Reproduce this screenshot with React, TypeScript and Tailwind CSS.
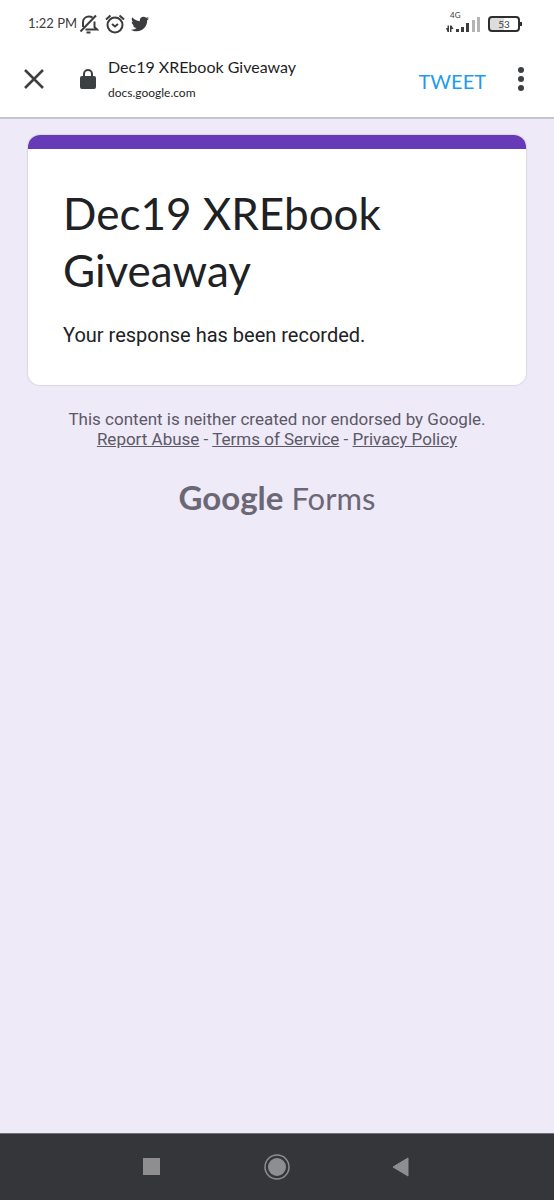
import { FaTwitter } from 'react-icons/fa';

const BellOffIcon = () => (
  <svg viewBox="0 0 20 20" className="h-5 w-5" fill="none" stroke="currentColor" strokeWidth="2">
    <path d="M4 13V8.5C4 5 6.5 2.5 10 2.5c1.400 0 2.500.4 3.500 1.100M15.500 7.500V13l2.500 2.500H6.500" />
    <path d="M1.500 17.500 17 1.500" />
    <path d="M7.500 18.500h4" />
  </svg>
);

const AlarmIcon = () => (
  <svg viewBox="0 0 20 20" className="h-5 w-5" fill="none" stroke="currentColor" strokeWidth="2">
    <circle cx="10" cy="11" r="7.500" />
    <path d="M1 5.500 5.500 1.500M19 5.500 14.500 1.500" />
    <path d="m7 10 3 2.500 3-2.500" />
  </svg>
);

const CloseIcon = () => (
  <svg viewBox="0 0 20 20" className="h-5 w-5" fill="none" stroke="currentColor" strokeWidth="2.5">
    <path d="m1 1 18 18M19 1 1 19" />
  </svg>
);

const LockIcon = () => (
  <svg viewBox="0 0 16 20" className="h-5 w-4" fill="currentColor">
    <rect y="7" width="16" height="13" rx="2" />
    <path d="M4 8V5a4 4 0 0 1 8 0v3" fill="none" stroke="currentColor" strokeWidth="2" />
  </svg>
);

const SignalIcon = () => (
  <svg viewBox="0 0 34 18" className="h-[18px] w-[34px]" fill="currentColor">
    <path d="M0 13h1.500v-2.500H3V17H1.500zM4 10.500h1.500l2 3.500h-2v3H4z" />
    <path d="M10 14h3v3h-3zM15 12h3v5h-3zM20 8h3v9h-3z" />
    <path d="M26 5h3v12h-3zM31 2h3v15h-3z" fill="#b4b4b4" />
  </svg>
);

const StatusBar = () => {
  return (
    <div className="flex h-12 items-center justify-between pr-8 pl-7 text-[#3c3c3e]">
      <div className="flex items-center gap-1.5">
        <span className="-mr-1 text-[13px]">1:22 PM</span>
        <BellOffIcon />
        <AlarmIcon />
        <FaTwitter className="h-[18px] w-[18px]" />
      </div>
      <div className="flex items-center gap-2">
        <div className="relative">
          <span className="absolute -top-1 left-1 text-[8px] leading-none">4G</span>
          <SignalIcon />
        </div>
        <div className="flex items-center">
          <div className="flex h-4 w-8 items-center justify-center rounded-[4px] border-2 border-[#2e2e30] bg-linear-to-r from-[#dddddd] from-50% to-white to-50% text-[10px] leading-none">
            53
          </div>
          <div className="h-1 w-0.5 bg-[#2e2e30]"></div>
        </div>
      </div>
    </div>
  );
};

const Toolbar = () => {
  return (
    <div className="flex h-[71px] items-center border-b-2 border-[#c6c4d2] px-6 pb-2 text-[#3c4043]">
      <button type="button" aria-label="Close" className="mr-9">
        <CloseIcon />
      </button>
      <LockIcon />
      <div className="ml-3 flex flex-1 flex-col gap-1 text-[#1f1f1f]">
        <span className="text-base leading-6">Dec19 XREbook Giveaway</span>
        <span className="text-xs leading-5">docs.google.com</span>
      </div>
      <button type="button" className="pt-1 text-[20px] text-[#1d9bf0]">TWEET</button>
      <button type="button" aria-label="More options" className="mr-1.5 ml-8">
        <svg viewBox="0 0 6 24" className="h-6 w-[6px]" fill="currentColor">
          <circle cx="3" cy="3" r="3" />
          <circle cx="3" cy="12" r="3" />
          <circle cx="3" cy="21" r="3" />
        </svg>
      </button>
    </div>
  );
};

const FormCard = () => {
  return (
    <div className="overflow-hidden rounded-xl bg-white shadow-[0_0_1px_1px_#dcd8e4]">
      <div className="h-[14px] bg-[#673ab7]"></div>
      <div className="px-[35px] pt-9 pb-[34px]">
        <h1 className="font-['Lato',sans-serif] text-[44px] leading-[57px] text-[#202124]">
          Dec19 XREbook Giveaway
        </h1>
        <p className="mt-5 text-[20px] leading-8 text-[#202124]">Your response has been recorded.</p>
      </div>
    </div>
  );
};

const NavBar = () => {
  return (
    <nav className="grid h-[67px] grid-cols-3 place-items-center border-t border-[#707078] bg-[#35363a] px-[90px] text-[#8e8e90]">
      <button type="button" aria-label="Recent apps">
        <svg viewBox="0 0 18 18" className="h-[18px] w-[18px]" fill="currentColor">
          <path d="M0 0h17v17H0z" />
        </svg>
      </button>
      <button type="button" aria-label="Home">
        <svg viewBox="0 0 26 26" className="h-[26px] w-[26px]" fill="currentColor">
          <circle cx="13" cy="13" r="9" />
          <circle cx="13" cy="13" r="12" fill="none" stroke="currentColor" strokeWidth="1.5" />
        </svg>
      </button>
      <button type="button" aria-label="Back">
        <svg viewBox="0 0 20 20" className="h-5 w-5" fill="currentColor" stroke="currentColor" strokeWidth="1" strokeLinejoin="round">
          <path d="M1 10 16 1v18z" />
        </svg>
      </button>
    </nav>
  );
};

const App = () => {
  return (
    <div className="flex min-h-screen flex-col bg-[#eeeaf8] font-['Roboto',sans-serif]">
      <header className="bg-white font-['Lato',sans-serif]">
        <StatusBar />
        <Toolbar />
      </header>

      <main className="flex-1 px-7 pt-4">
        <FormCard />
        <div className="mt-6 text-center text-[17px] leading-5 text-[#5c5866]">
          <p>This content is neither created nor endorsed by Google.</p>
          <p>
            <a href="#" className="underline">Report Abuse</a> - <a href="#" className="underline">Terms of Service</a> - <a href="#" className="underline">Privacy Policy</a>
          </p>
        </div>
        <div className="mt-7 flex items-baseline justify-center gap-2 font-['Lato',sans-serif] leading-10 text-[#6b6774]">
          <span className="text-[33px] font-bold">Google</span>
          <span className="text-[31px]">Forms</span>
        </div>
      </main>

      <NavBar />
    </div>
  );
};

export default App;
